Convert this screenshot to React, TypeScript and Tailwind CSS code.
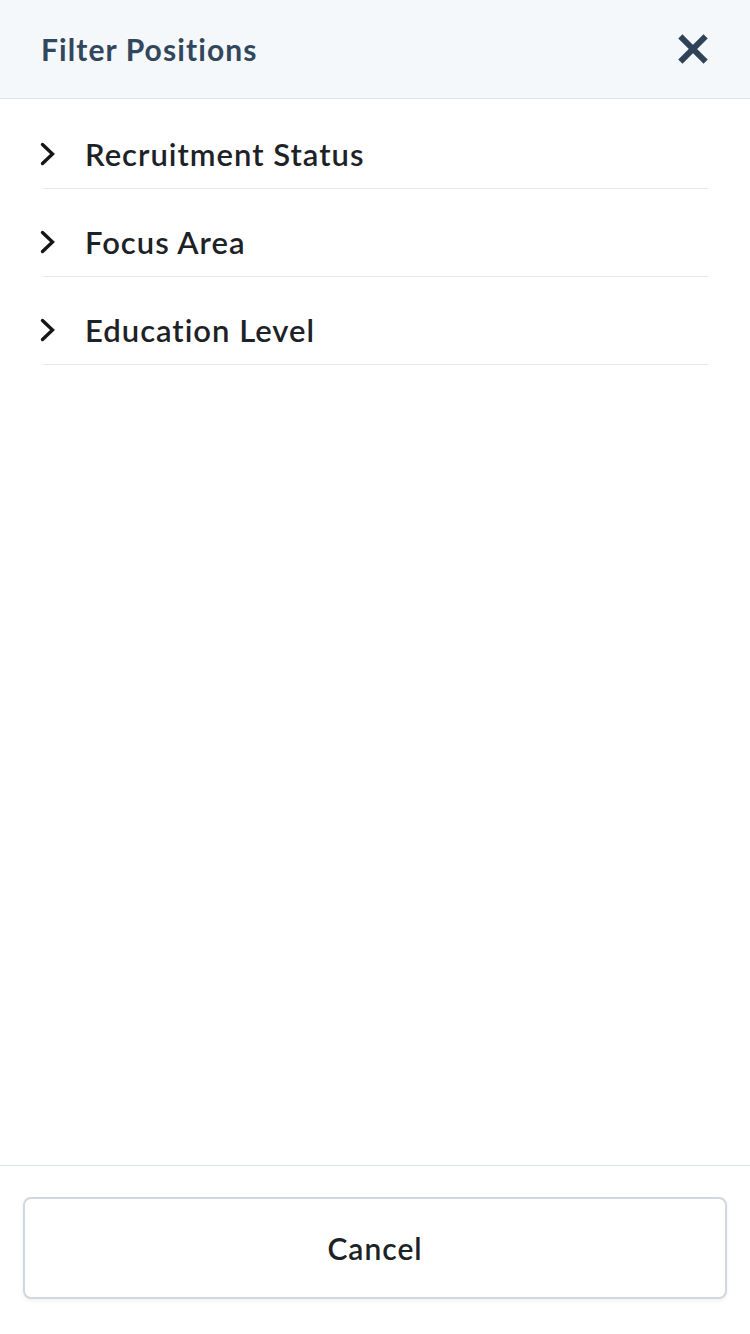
import React from "react";

const sections = ["Recruitment Status", "Focus Area", "Education Level"];

function Chevron() {
  return (
    <svg width="16" height="24" viewBox="0 0 16 24" className="shrink-0">
      <polyline
        points="2.5,2.5 12.5,12 2.5,21.5"
        fill="none"
        stroke="#14171a"
        strokeWidth="3.4"
        strokeLinecap="round"
        strokeLinejoin="miter"
      />
    </svg>
  );
}

function CloseIcon() {
  return (
    <svg width="32" height="32" viewBox="0 0 32 32">
      <path
        d="M5.5 5.5 L26.5 26.5 M26.5 5.5 L5.5 26.5"
        stroke="#2f4257"
        strokeWidth="6"
        strokeLinecap="square"
      />
    </svg>
  );
}

export default function App() {
  return (
    <div
      className="h-screen w-full flex flex-col bg-white"
      style={{ fontFamily: "Lato, 'Open Sans', sans-serif" }}
    >
      <header className="h-[99px] shrink-0 flex items-center justify-between pl-[41px] pr-[39px] bg-[#f5f8fb] border-b border-[#dde3ea]">
        <h1 className="text-[30px] font-bold text-[#33475c] tracking-[1.1px]">
          Filter Positions
        </h1>
        <button className="w-[36px] h-[36px] flex items-center justify-center">
          <CloseIcon />
        </button>
      </header>

      <div className="flex-1 px-[42px] pt-[2px]">
        {sections.map((name) => {
          return (
            <div
              key={name}
              className="flex items-center pt-[36px] pb-[17px] border-b border-[#e4e9ee]"
            >
              <div className="w-[45px] flex items-center -ml-[2px]">
                <Chevron />
              </div>
              <span className="text-[31px] leading-[34px] font-semibold text-[#1d2227] tracking-[1px]">
                {name}
              </span>
            </div>
          );
        })}
      </div>

      <footer className="shrink-0 border-t border-[#dde3ea] px-[23px] pt-[31px] pb-[35px]">
        <button className="w-full h-[102px] rounded-[8px] border-2 border-[#cfd8e0] bg-white shadow-[0_2px_4px_rgba(0,0,0,0.06)] text-[30px] font-semibold text-[#1d2227] tracking-[1px]">
          Cancel
        </button>
      </footer>
    </div>
  );
}
